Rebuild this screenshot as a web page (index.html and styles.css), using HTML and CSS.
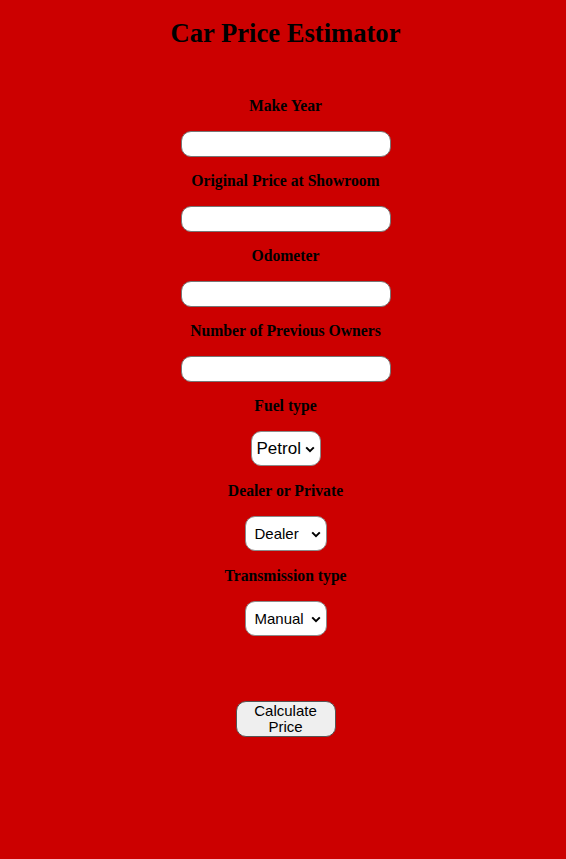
FILE: index.html
```html
<!DOCTYPE html>
<html>
<head>
<meta charset="utf-8">
<link rel="stylesheet" href="styles.css">
</head>
<body>
<h1 class="title">Car Price Estimator</h1>
<form class="form">
  <label class="label">Make Year</label>
  <input class="field" type="text">
  <label class="label">Original Price at Showroom</label>
  <input class="field" type="text">
  <label class="label">Odometer</label>
  <input class="field" type="text">
  <label class="label">Number of Previous Owners</label>
  <input class="field" type="text">
  <label class="label">Fuel type</label>
  <select class="choice choice-fuel"><option>Petrol</option><option>Diesel</option><option>CNG</option></select>
  <label class="label">Dealer or Private</label>
  <select class="choice choice-wide"><option>Dealer</option><option>Individual</option></select>
  <label class="label">Transmission type</label>
  <select class="choice choice-wide"><option>Manual</option><option>Automatic</option></select>
  <button class="submit" type="button">Calculate Price</button>
</form>
</body>
</html>
```
FILE: styles.css
```css
html, body {
  margin: 0;
  padding: 0;
  background: #cc0000;
  min-height: 100%;
}
body {
  font-family: "Liberation Serif", "Times New Roman", serif;
  color: #000;
  padding-left: 5px;
}
.title {
  margin: 18px 0 0;
  font-size: 26.6px;
  line-height: 30px;
  text-align: center;
  font-weight: bold;
}
.form {
  display: flex;
  flex-direction: column;
  align-items: center;
  padding-top: 48px;
}
.label {
  display: block;
  font-size: 15.7px;
  font-weight: bold;
  line-height: 20px;
  margin: 0 0 15px;
}
.field {
  box-sizing: border-box;
  width: 210px;
  height: 26px;
  border: 1px solid #767676;
  border-radius: 10px;
  background: #fff;
  margin: 0 0 14px;
  padding: 0 8px;
}
.choice {
  box-sizing: border-box;
  height: 35px;
  border: 1px solid #8a8a8a;
  border-radius: 10px;
  background-color: #fff;
  background-image: url("data:image/svg+xml,%3Csvg xmlns='http://www.w3.org/2000/svg' width='10' height='7' viewBox='0 0 10 7'%3E%3Cpath d='M1.2 1.4 L5 5.2 L8.8 1.4' fill='none' stroke='%23000' stroke-width='2'/%3E%3C/svg%3E");
  background-repeat: no-repeat;
  background-size: 10px 7px;
  -webkit-appearance: none;
  appearance: none;
  color: #000;
  font-family: "Liberation Sans", Arial, sans-serif;
  margin: 0 0 15px;
}
.choice-fuel {
  width: 70px;
  font-size: 17px;
  padding: 0 0 0 5px;
  background-position: 53px 14px;
}
.choice-wide {
  width: 82px;
  font-size: 15px;
  padding: 0 0 0 9px;
  background-position: 65px 14px;
}
.submit {
  box-sizing: border-box;
  margin-top: 50px;
  width: 100px;
  height: 36px;
  border: 1px solid #555;
  border-radius: 10px;
  background: #efefef;
  font-family: "Liberation Sans", Arial, sans-serif;
  font-size: 15px;
  line-height: 16px;
  padding: 0 10px;
  color: #000;
}
```
